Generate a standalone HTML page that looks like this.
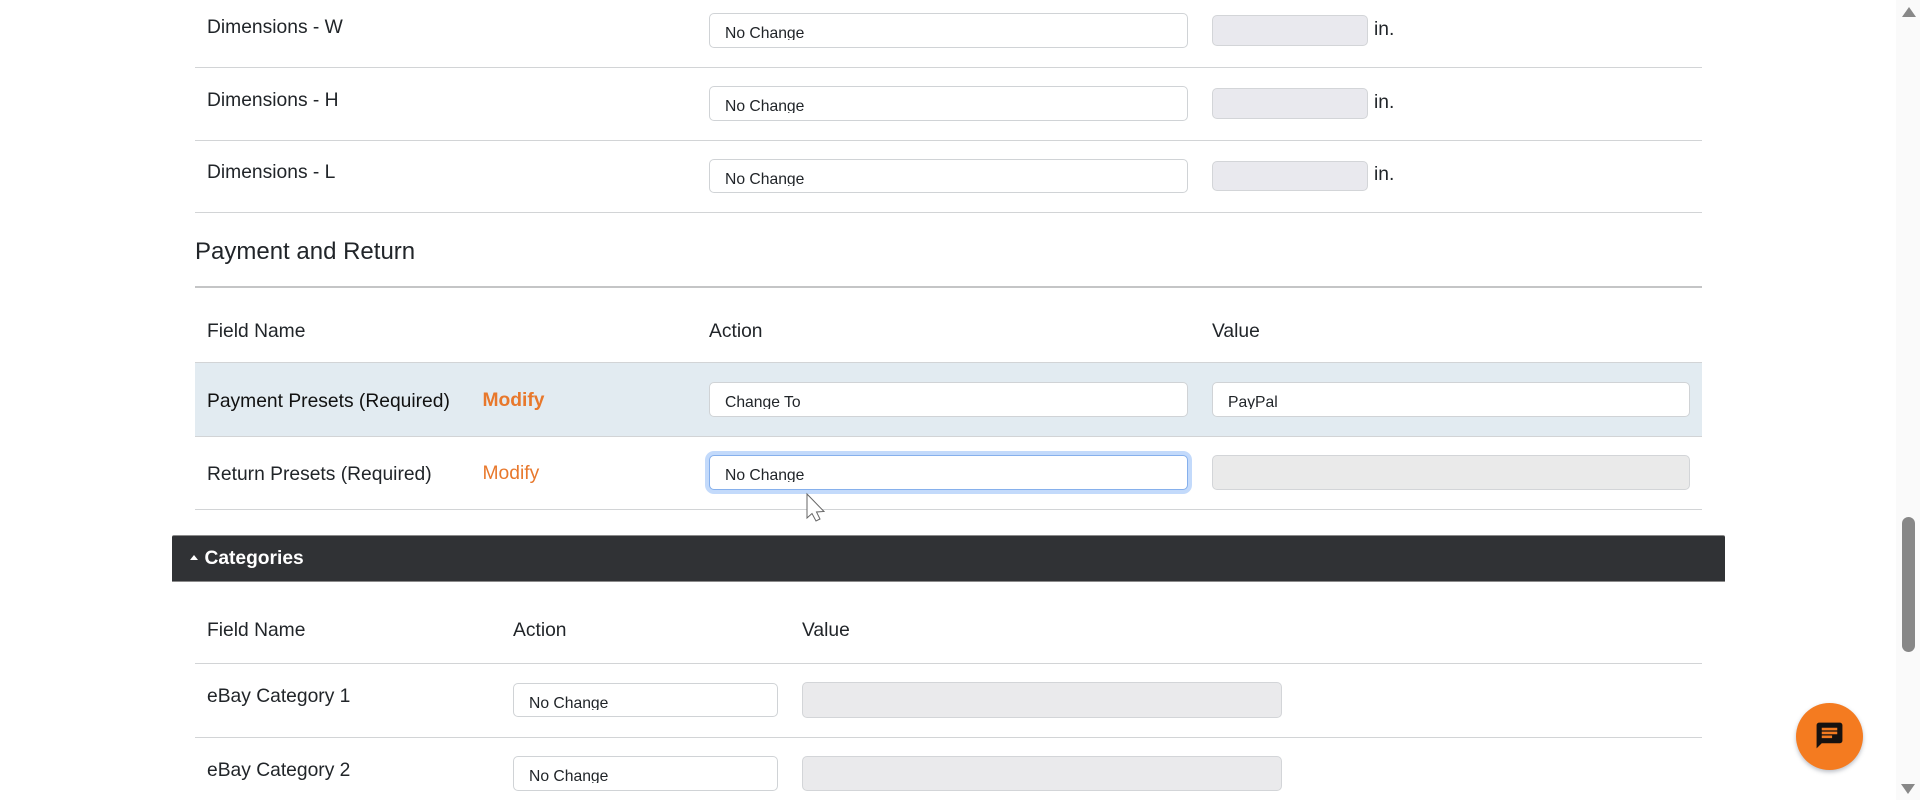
<!DOCTYPE html>
<html>
<head>
<meta charset="utf-8">
<style>
html,body{margin:0;padding:0;width:1920px;height:800px;overflow:hidden;background:#fff;font-family:"Liberation Sans",Arial,sans-serif;color:#212529}
.a{position:absolute}
.t{position:absolute;white-space:nowrap;font-size:19.25px;line-height:24px;height:24px;margin-top:2px}
.l{position:absolute;left:195px;width:1507px;height:1px;background:#d2d4d6}
.s{position:absolute;box-sizing:border-box;background:#fff;border:1px solid #d0d3d6;border-radius:5px;overflow:hidden;font-size:15.7px;color:#212529}
.s span{position:absolute;left:15px;top:7.500px;line-height:24px;height:18px;overflow:hidden;white-space:nowrap}
.d{position:absolute;box-sizing:border-box;background:#e9e9ee;border:1px solid #d3d5d8;border-radius:5px}
.o{color:#e8782c}
</style>
</head>
<body>
<div class="t" style="left:207px;top:14px">Dimensions - W</div>
<div class="s" style="left:709px;top:13px;width:479px;height:35px"><span>No Change</span></div>
<div class="d" style="left:1212px;top:15px;width:156px;height:31px"></div>
<div class="t" style="left:1374px;top:16px">in.</div>
<div class="l" style="top:67px"></div>

<div class="t" style="left:207px;top:87px">Dimensions - H</div>
<div class="s" style="left:709px;top:86px;width:479px;height:35px"><span>No Change</span></div>
<div class="d" style="left:1212px;top:88px;width:156px;height:31px"></div>
<div class="t" style="left:1374px;top:89px">in.</div>
<div class="l" style="top:140px"></div>

<div class="t" style="left:207px;top:159px">Dimensions - L</div>
<div class="s" style="left:709px;top:159px;width:479px;height:34px"><span>No Change</span></div>
<div class="d" style="left:1212px;top:161px;width:156px;height:30px"></div>
<div class="t" style="left:1374px;top:161px">in.</div>
<div class="l" style="top:212px"></div>

<div class="t" style="left:195px;top:236px;font-size:24px;line-height:28px;height:28px">Payment and Return</div>
<div class="l" style="top:286px;height:2px;background:#c4c5c6"></div>

<div class="t" style="left:207px;top:318px">Field Name</div>
<div class="t" style="left:709px;top:318px">Action</div>
<div class="t" style="left:1212px;top:318px">Value</div>

<div class="a" style="left:195px;top:363px;width:1507px;height:73px;background:#e2ebf1"></div>
<div class="l" style="top:362px"></div>
<div class="t" style="left:207px;top:388px;color:#111">Payment Presets (Required)</div>
<div class="t o" style="left:482.500px;top:387px;font-weight:bold">Modify</div>
<div class="s" style="left:709px;top:382px;width:479px;height:35px"><span>Change To</span></div>
<div class="s" style="left:1212px;top:382px;width:478px;height:35px"><span>PayPal</span></div>
<div class="l" style="top:436px"></div>

<div class="t" style="left:207px;top:461px">Return Presets (Required)</div>
<div class="t o" style="left:482.500px;top:460px">Modify</div>
<div class="s" style="left:709px;top:455px;width:479px;height:35px;border-color:#86b0ec;box-shadow:0 0 0 4px #c3dafb"><span>No Change</span></div>
<div class="d" style="left:1212px;top:455px;width:478px;height:35px;background:#eaeaea"></div>
<div class="l" style="top:509px"></div>

<div class="a" style="left:172px;top:535px;width:1553px;height:47px;box-sizing:border-box;background:#303235;border-top:1px solid #8a8a8a;border-bottom:1px solid #8a8a8a;border-radius:2px 2px 0 0"></div>
<div class="a" style="left:190px;top:555px;width:0;height:0;border-left:4.500px solid transparent;border-right:4.500px solid transparent;border-bottom:5px solid #fff"></div>
<div class="t" style="left:204.500px;top:545px;color:#fff;font-weight:bold;font-size:19.2px">Categories</div>

<div class="t" style="left:207px;top:617px">Field Name</div>
<div class="t" style="left:513px;top:617px">Action</div>
<div class="t" style="left:802px;top:617px">Value</div>
<div class="l" style="top:663px"></div>

<div class="t" style="left:207px;top:683px">eBay Category 1</div>
<div class="s" style="left:513px;top:683px;width:265px;height:34px"><span>No Change</span></div>
<div class="d" style="left:802px;top:682px;width:480px;height:36px;background:#eaeaec"></div>
<div class="l" style="top:737px"></div>

<div class="t" style="left:207px;top:757px">eBay Category 2</div>
<div class="s" style="left:513px;top:756px;width:265px;height:35px"><span>No Change</span></div>
<div class="d" style="left:802px;top:756px;width:480px;height:35px;background:#eaeaec"></div>

<!-- mouse cursor -->
<svg class="a" style="left:804px;top:492px" width="24" height="32" viewBox="0 0 24 32">
<path d="M3 2 L3 26 L8 21.500 L12 29 L16 27 L12.500 20 L20 19.500 Z" fill="#fff" stroke="#666" stroke-width="1"/>
</svg>

<!-- scrollbar -->
<div class="a" style="left:1896px;top:0;width:24px;height:800px;background:#fafafa"></div>
<div class="a" style="left:1902px;top:517px;width:13px;height:135px;border-radius:7px;background:#878787"></div>
<div class="a" style="left:1902px;top:7px;width:0;height:0;border-left:7px solid transparent;border-right:7px solid transparent;border-bottom:10px solid #888"></div>
<div class="a" style="left:1901px;top:784px;width:0;height:0;border-left:7.500px solid transparent;border-right:7.500px solid transparent;border-top:10px solid #888"></div>

<!-- chat button -->
<div class="a" style="left:1796px;top:703px;width:67px;height:67px;border-radius:50%;background:#f47b20;box-shadow:0 2px 4px rgba(60,70,90,.35)"></div>
<svg class="a" style="left:1814px;top:720px" width="31" height="31" viewBox="0 0 24 24">
<path d="M20 2H4c-1.100 0-2 .9-2 2v18l4-4h14c1.100 0 2-.9 2-2V4c0-1.100-.9-2-2-2zM6 9h12v2H6V9zm8 5H6v-2h8v2zm4-6H6V6h12v2z" fill="#161210"/>
</svg>
</body>
</html>
